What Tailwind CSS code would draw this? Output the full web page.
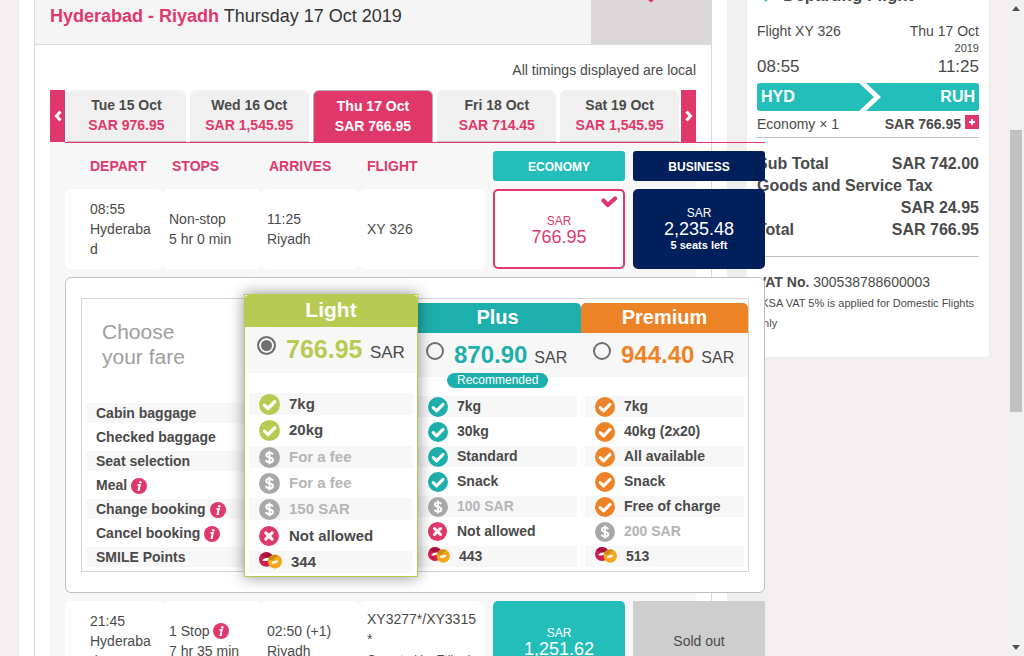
<!DOCTYPE html>
<html lang="en">
<head>
<meta charset="utf-8">
<meta name="viewport" content="width=device-width, initial-scale=1">
<title>Hyderabad - Riyadh fares</title>
<script src="https://cdn.jsdelivr.net/npm/@tailwindcss/browser@4"></script>
</head>
<body class="flex h-screen overflow-hidden bg-[#f0eeef] font-['Liberation_Sans',Arial,sans-serif] text-sm/5 text-[#4a4a4a]">

<svg class="hidden" aria-hidden="true">
  <symbol id="check" viewBox="0 0 20 20"><circle cx="10" cy="10" r="10" fill="currentColor"/><path d="M5.2 10.6l3.400 3.200 6.400-6.400" fill="none" stroke="#fff" stroke-width="3.100" stroke-linecap="round" stroke-linejoin="round"/></symbol>
  <symbol id="fee" viewBox="0 0 20 20"><circle cx="10" cy="10" r="10" fill="#a8a8a8"/><path d="M13.2 7.2C12.600 5.900 11.400 5.400 10 5.400c-1.900 0-3.100.9-3.100 2.200 0 3.200 6.400 1.500 6.400 4.700 0 1.400-1.300 2.300-3.300 2.300-1.700 0-2.900-.6-3.500-2M10 3.600v12.800" fill="none" stroke="#fff" stroke-width="1.900"/></symbol>
  <symbol id="cross" viewBox="0 0 20 20"><circle cx="9.500" cy="9.500" r="9.500" fill="#e0386b"/><path d="M6.500 6.500l6 6M12.500 6.500l-6 6" stroke="#fff" stroke-width="3" stroke-linecap="round"/></symbol>
  <symbol id="smile" viewBox="0 0 22 16">
    <circle cx="7" cy="7" r="7" fill="#d11e4f"/><path d="M1.500 3a7 7 0 0 1 11.500.4L8 6z" fill="#a80f3c"/><path d="M3 8c2-2.500 5-3 7.500-2.200C9.500 8 7 9 4.600 8.400z" fill="#fff"/>
    <circle cx="15.300" cy="9" r="6.700" fill="#f6a81c"/><path d="M9 7a6.700 6.700 0 0 1 9-4l-5 5z" fill="#c98a12"/><path d="M11.500 10.200c1.500-2 4.500-2.800 7-2-1 2.200-3.500 3.200-5.600 2.600z" fill="#fff"/>
  </symbol>
  <symbol id="info" viewBox="0 0 16 16"><circle cx="8" cy="8" r="8" fill="#e0386b"/><circle cx="9.300" cy="4.200" r="1.300" fill="#fff"/><path d="M6.500 7h2.300l-1.200 5h1.300" fill="none" stroke="#fff" stroke-width="1.900"/></symbol>
</svg>

<div class="flex min-w-0 flex-1 items-start gap-5 px-[19px]">

  <main class="relative z-10 min-h-screen min-w-0 flex-1 bg-white px-[15px]">
    <div class="min-h-screen border-x border-[#dadada]">
      <header class="flex h-[45px] border-b border-[#dadada] bg-[#f5f5f5]">
        <h1 class="flex-1 pl-[15px] text-lg/8 text-[#333]"><strong class="text-[#e0386b]">Hyderabad - Riyadh</strong> Thursday 17 Oct 2019</h1>
        <button type="button" aria-label="Collapse" class="flex w-[120px] items-start justify-center bg-[#dad8d9]">
          <svg class="h-[3px] w-3" viewBox="0 0 12 3"><path d="M3 0h6L6 2.500z" fill="#e0386b"/></svg>
        </button>
      </header>

      <div class="px-[15px]">
        <p class="pt-[15px] pb-[10px] text-right">All timings displayed are local</p>

        <nav class="flex h-[52px]" aria-label="Dates">
          <button type="button" aria-label="Earlier dates" class="flex w-[15px] items-center justify-center bg-[#e0386b]"><svg class="h-3 w-2" viewBox="0 0 8 12"><path d="M6.500 1.500L2.500 6l4 4.500" fill="none" stroke="#fff" stroke-width="3"/></svg></button>
          <div class="flex flex-1 gap-1 px-0.5 text-center font-bold">
            <button type="button" class="flex-1 rounded-t-md border-b border-[#c4c4c4] bg-[#f0f0f0] pb-px">Tue 15 Oct<span class="block text-[#e0386b]">SAR 976.95</span></button>
            <button type="button" class="flex-1 rounded-t-md border-b border-[#c4c4c4] bg-[#f0f0f0] pb-px">Wed 16 Oct<span class="block text-[#e0386b]">SAR 1,545.95</span></button>
            <button type="button" class="flex-1 rounded-t-md border-x border-t border-[#b9b0b3] bg-[#e0386b] pb-px text-white">Thu 17 Oct<span class="block">SAR 766.95</span></button>
            <button type="button" class="flex-1 rounded-t-md border-b border-[#c4c4c4] bg-[#f0f0f0] pb-px">Fri 18 Oct<span class="block text-[#e0386b]">SAR 714.45</span></button>
            <button type="button" class="flex-1 rounded-t-md border-b border-[#c4c4c4] bg-[#f0f0f0] pb-px">Sat 19 Oct<span class="block text-[#e0386b]">SAR 1,545.95</span></button>
          </div>
          <button type="button" aria-label="Later dates" class="flex w-[15px] items-center justify-center bg-[#e0386b]"><svg class="h-3 w-2" viewBox="0 0 8 12"><path d="M1.500 1.500l4 4.500-4 4.500" fill="none" stroke="#fff" stroke-width="3"/></svg></button>
        </nav>

        <div class="bg-[#f7f7f7] pl-[15px]">
          <div class="-mr-[69px] border-t border-[#e0386b]">

            <div class="flex h-[46px] items-center gap-2 font-bold">
              <div class="flex flex-1 text-[#e0386b]">
                <span class="w-[107px] pl-[25px]">DEPART</span><span class="w-[97px]">STOPS</span><span class="w-[98px]">ARRIVES</span><span>FLIGHT</span>
              </div>
              <span class="w-[132px] rounded-[3px] bg-[#23bdba] pt-[6px] pb-1 text-center text-xs/5 text-white">ECONOMY</span>
              <span class="w-[132px] rounded-[3px] bg-[#001f5b] pt-[6px] pb-1 text-center text-xs/5 text-white">BUSINESS</span>
            </div>

            <section class="flex h-20 gap-2">
              <div class="flex min-w-0 flex-1">
                <div class="flex w-[98px] items-center rounded-md bg-white pr-[11px] pl-[25px]"><p class="w-full break-all">08:55<br>Hyderabad</p></div>
                <div class="flex w-[98px] items-center rounded-md bg-white pl-[6px]"><p>Non-stop<br>5 hr 0 min</p></div>
                <div class="flex w-[98px] items-center rounded-md bg-white pl-[6px]"><p>11:25<br>Riyadh</p></div>
                <div class="flex flex-1 items-center rounded-md bg-white pl-2"><p>XY 326</p></div>
              </div>
              <button type="button" class="relative w-[132px] rounded-[5px] border-2 border-[#e0386b] bg-white text-[#e0386b]">
                <svg class="absolute top-1 right-1.5 h-3.5 w-4" viewBox="0 0 16 14"><path d="M2.500 5.500L6.800 10 14 3.500" fill="none" stroke="#e0386b" stroke-width="4.200" stroke-linecap="round" stroke-linejoin="round"/></svg>
                <span class="block text-xs/4">SAR</span><span class="block text-lg/4">766.95</span>
              </button>
              <button type="button" class="w-[132px] rounded-[5px] bg-[#001f5b] text-white"><span class="block text-xs/4">SAR</span><span class="block text-lg/4">2,235.48</span><strong class="block text-[11px]/4">5 seats left</strong></button>
            </section>

            <section class="mt-2 rounded-md border border-[#c0c0c0] bg-white px-[15px] py-5">
              <div class="grid h-[274px] grid-cols-[166fr_166fr_167fr_167fr] border border-[#d5d5d5]">

                <div class="flex flex-col pt-5">
                  <h2 class="pl-5 text-[21px]/[25px] text-[#9e9e9e]">Choose<br>your fare</h2>
                  <ul class="mt-[34px] ml-1 space-y-1 font-bold">
                    <li class="h-5 bg-[#f7f7f7] pl-[10px]">Cabin baggage</li>
                    <li class="h-5 pl-[10px]">Checked baggage</li>
                    <li class="h-5 bg-[#f7f7f7] pl-[10px]">Seat selection</li>
                    <li class="flex h-5 items-center gap-1 pl-[10px]">Meal <svg class="mt-0.5 size-4"><use href="#info"/></svg></li>
                    <li class="flex h-5 items-center gap-1 bg-[#f7f7f7] pl-[10px]">Change booking <svg class="mt-0.5 size-4"><use href="#info"/></svg></li>
                    <li class="flex h-5 items-center gap-1 pl-[10px]">Cancel booking <svg class="mt-0.5 size-4"><use href="#info"/></svg></li>
                    <li class="h-5 bg-[#f7f7f7] pl-[10px]">SMILE Points</li>
                  </ul>
                </div>

                <article class="relative z-10 -mx-1 -mt-[5px] -mb-1.5 flex flex-col border border-[#b7cb52] bg-white shadow-[0_0_14px_rgba(0,0,0,0.45)]">
                  <h3 class="rounded-t bg-[#b7cb52] pb-0.5 text-center text-[21px]/[30px] font-bold text-white">Light</h3>
                  <label class="flex h-[46px] items-baseline gap-[10px] bg-[#f7f7f7] pt-1 pl-3">
                    <input type="radio" name="fare" checked class="mt-[5px] size-[19px] appearance-none self-start rounded-full border-2 border-[#707070] bg-[#707070] shadow-[inset_0_0_0_2px_#f7f7f7]">
                    <span class="text-[17px]/9 whitespace-nowrap"><strong class="text-[25px]/9 text-[#b7cb52]">766.95</strong>&nbsp; <span class="-ml-0.5">SAR</span></span>
                  </label>
                  <ul class="mx-1 mt-5 mb-[3px] flex flex-1 flex-col justify-between text-[15px]/[21px] font-bold">
                    <li class="flex h-[22px] gap-[9px] bg-[#f7f7f7] pl-[10px]"><svg class="mt-px size-[21px] shrink-0 text-[#b7cb52]"><use href="#check"/></svg>7kg</li>
                    <li class="flex h-[22px] gap-[9px] pl-[10px]"><svg class="mt-px size-[21px] shrink-0 text-[#b7cb52]"><use href="#check"/></svg>20kg</li>
                    <li class="flex h-[22px] gap-[9px] bg-[#f7f7f7] pl-[10px] text-[#b5b5b5]"><svg class="mt-px size-[21px] shrink-0"><use href="#fee"/></svg>For a fee</li>
                    <li class="flex h-[22px] gap-[9px] pl-[10px] text-[#b5b5b5]"><svg class="mt-px size-[21px] shrink-0"><use href="#fee"/></svg>For a fee</li>
                    <li class="flex h-[22px] gap-[9px] bg-[#f7f7f7] pl-[10px] text-[#b5b5b5]"><svg class="mt-px size-[21px] shrink-0"><use href="#fee"/></svg>150 SAR</li>
                    <li class="flex h-[22px] gap-[9px] pl-[10px]"><svg class="mt-px size-[21px] shrink-0"><use href="#cross"/></svg>Not allowed</li>
                    <li class="flex h-[22px] gap-[9px] bg-[#f7f7f7] pl-[10px]"><svg class="mt-px h-[17px] w-[23px] shrink-0"><use href="#smile"/></svg>344</li>
                  </ul>
                </article>

                <article class="flex flex-col pt-1">
                  <h3 class="rounded-t-[5px] bg-[#1dafab] pb-0.5 text-center text-xl/7 font-bold text-white">Plus</h3>
                  <label class="relative flex h-11 items-baseline gap-[10px] bg-[#f7f7f7] pt-1 pl-3">
                    <input type="radio" name="fare" class="mt-[5px] size-[18px] appearance-none self-start rounded-full border-2 border-[#707070]">
                    <span class="text-base/9 whitespace-nowrap"><strong class="text-2xl/9 text-[#1dafab]">870.90</strong>&nbsp; <span class="-ml-0.5">SAR</span></span>
                    <span class="absolute top-10 left-[33px] rounded-full bg-[#1dafab] px-[10px] text-xs/[15px] text-white">Recommended</span>
                  </label>
                  <ul class="mx-1 mt-[19px] space-y-1 font-bold">
                    <li class="flex h-[21px] gap-[9px] bg-[#f7f7f7] pl-[10px]"><svg class="mt-px size-5 shrink-0 text-[#1dafab]"><use href="#check"/></svg>7kg</li>
                    <li class="flex h-[21px] gap-[9px] pl-[10px]"><svg class="mt-px size-5 shrink-0 text-[#1dafab]"><use href="#check"/></svg>30kg</li>
                    <li class="flex h-[21px] gap-[9px] bg-[#f7f7f7] pl-[10px]"><svg class="mt-px size-5 shrink-0 text-[#1dafab]"><use href="#check"/></svg>Standard</li>
                    <li class="flex h-[21px] gap-[9px] pl-[10px]"><svg class="mt-px size-5 shrink-0 text-[#1dafab]"><use href="#check"/></svg>Snack</li>
                    <li class="flex h-[21px] gap-[9px] bg-[#f7f7f7] pl-[10px] text-[#b5b5b5]"><svg class="mt-px size-5 shrink-0"><use href="#fee"/></svg>100 SAR</li>
                    <li class="flex h-[21px] gap-[9px] pl-[10px]"><svg class="mt-px size-5 shrink-0"><use href="#cross"/></svg>Not allowed</li>
                    <li class="flex h-[21px] gap-[9px] bg-[#f7f7f7] pl-[10px]"><svg class="mt-px h-4 w-[22px] shrink-0"><use href="#smile"/></svg>443</li>
                  </ul>
                </article>

                <article class="flex flex-col pt-1">
                  <h3 class="rounded-t-[5px] bg-[#ec8326] pb-0.5 text-center text-xl/7 font-bold text-white">Premium</h3>
                  <label class="flex h-11 items-baseline gap-[10px] bg-[#f7f7f7] pt-1 pl-3">
                    <input type="radio" name="fare" class="mt-[5px] size-[18px] appearance-none self-start rounded-full border-2 border-[#707070]">
                    <span class="text-base/9 whitespace-nowrap"><strong class="text-2xl/9 text-[#ec8326]">944.40</strong>&nbsp; <span class="-ml-0.5">SAR</span></span>
                  </label>
                  <ul class="mx-1 mt-[19px] space-y-1 font-bold">
                    <li class="flex h-[21px] gap-[9px] bg-[#f7f7f7] pl-[10px]"><svg class="mt-px size-5 shrink-0 text-[#ec8326]"><use href="#check"/></svg>7kg</li>
                    <li class="flex h-[21px] gap-[9px] pl-[10px]"><svg class="mt-px size-5 shrink-0 text-[#ec8326]"><use href="#check"/></svg>40kg (2x20)</li>
                    <li class="flex h-[21px] gap-[9px] bg-[#f7f7f7] pl-[10px]"><svg class="mt-px size-5 shrink-0 text-[#ec8326]"><use href="#check"/></svg>All available</li>
                    <li class="flex h-[21px] gap-[9px] pl-[10px]"><svg class="mt-px size-5 shrink-0 text-[#ec8326]"><use href="#check"/></svg>Snack</li>
                    <li class="flex h-[21px] gap-[9px] bg-[#f7f7f7] pl-[10px]"><svg class="mt-px size-5 shrink-0 text-[#ec8326]"><use href="#check"/></svg>Free of charge</li>
                    <li class="flex h-[21px] gap-[9px] pl-[10px] text-[#b5b5b5]"><svg class="mt-px size-5 shrink-0"><use href="#fee"/></svg>200 SAR</li>
                    <li class="flex h-[21px] gap-[9px] bg-[#f7f7f7] pl-[10px]"><svg class="mt-px h-4 w-[22px] shrink-0"><use href="#smile"/></svg>513</li>
                  </ul>
                </article>
              </div>
            </section>

            <section class="mt-2 flex h-20 gap-2">
              <div class="flex min-w-0 flex-1">
                <div class="flex w-[98px] items-center rounded-md bg-white pr-[11px] pl-[25px]"><p class="w-full break-all">21:45<br>Hyderabad</p></div>
                <div class="flex w-[98px] items-center rounded-md bg-white pl-[6px]"><div><p class="flex items-center gap-1">1 Stop <svg class="size-4"><use href="#info"/></svg></p><p>7 hr 35 min</p></div></div>
                <div class="flex w-[98px] items-center rounded-md bg-white pl-[6px]"><p>02:50 (+1)<br>Riyadh</p></div>
                <div class="flex-1 rounded-md bg-white pt-2 pl-2"><p>XY3277*/XY3315<br>*</p><p class="pt-px text-xs/5">Operated by Etihad</p></div>
              </div>
              <button type="button" class="w-[132px] rounded-[5px] bg-[#23bdba] text-white"><span class="block text-xs/4">SAR</span><span class="block text-lg/4">1,251.62</span></button>
              <div class="flex w-[132px] items-center justify-center bg-[#cecece]">Sold out</div>
            </section>
          </div>
        </div>
      </div>
    </div>
  </main>

  <aside class="-mt-3.5 w-[242px] rounded-b bg-white px-[10px] pb-6">
    <h2 class="flex items-center gap-3 pl-1 text-[17px]/5 font-bold"><svg class="mt-1.5 size-2.5" viewBox="0 0 10 10"><path d="M0 2h10L5 8z" fill="#23bdba"/></svg>Departing Flight</h2>
    <p class="mt-[15px] flex justify-between"><span>Flight XY 326</span><span>Thu 17 Oct</span></p>
    <p class="text-right text-[11px]/[14px]">2019</p>
    <p class="mt-0.5 flex justify-between text-[17px]/5"><span>08:55</span><span>11:25</span></p>
    <div class="mt-1.5 flex h-7 items-center overflow-hidden rounded-[3px] bg-[#23bdba] px-1 text-base font-bold text-white">
      <span class="flex-1">HYD</span>
      <svg class="ml-1 h-7 w-[22px]" viewBox="0 0 22 28"><path d="M0 0h7l15 14L7 28H0l15-14z" fill="#fff"/></svg>
      <span class="flex-1 text-right">RUH</span>
    </div>
    <div class="flex items-start border-b border-[#c2c2c2] pt-[3px] pb-[3px]"><span class="flex-1">Economy × 1</span><strong>SAR 766.95</strong><button type="button" aria-label="Show fare details" class="mt-px ml-1 flex size-3.5 items-center justify-center bg-[#e0386b]"><svg class="size-1.5" viewBox="0 0 6 6"><path d="M3 0v6M0 3h6" stroke="#fff" stroke-width="2"/></svg></button></div>
    <dl class="border-b border-[#c2c2c2] pt-[15px] pb-[15px] text-base/[22px] font-bold">
      <div class="flex justify-between"><dt>Sub Total</dt><dd>SAR 742.00</dd></div>
      <div><dt>Goods and Service Tax</dt><dd class="text-right">SAR 24.95</dd></div>
      <div class="flex justify-between"><dt>Total</dt><dd>SAR 766.95</dd></div>
    </dl>
    <p class="mt-[15px]"><strong>VAT No.</strong> 300538788600003</p>
    <p class="pt-px text-[11px]/5">*KSA VAT 5% is applied for Domestic Flights only</p>
  </aside>
</div>

<div class="flex w-4 shrink-0 flex-col items-center bg-[#f1f1f1]" aria-hidden="true">
  <svg class="mt-1.5 h-[5px] w-2" viewBox="0 0 8 5"><path d="M0 5h8L4 0z" fill="#505050"/></svg>
  <div class="mt-[119px] h-[282px] w-3 bg-[#c1c1c1]"></div>
  <svg class="mt-auto mb-1.5 h-[5px] w-2" viewBox="0 0 8 5"><path d="M0 0h8L4 5z" fill="#505050"/></svg>
</div>
</body>
</html>
